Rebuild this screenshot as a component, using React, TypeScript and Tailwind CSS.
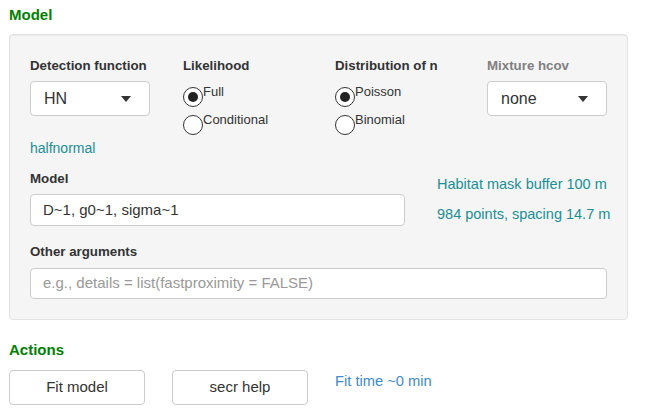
import React from 'react';

const Caret = () => (
  <svg width="10" height="6" viewBox="0 0 10 6" className="shrink-0">
    <path d="M0 0 L10 0 L5 6 Z" fill="#333" />
  </svg>
);

const Select = ({ value }: { value: string }) => (
  <div className="flex h-[35px] w-[120px] items-center justify-between rounded-[4px] border border-[#cccccc] bg-white pl-[13px] pr-[18px] text-[16px] text-[#333]">
    <span>{value}</span>
    <Caret />
  </div>
);

const Radio = ({ label, checked }: { label: string; checked?: boolean }) => (
  <div className="flex items-start h-[28px]">
    <span className="mt-[3px] flex h-[20px] w-[20px] shrink-0 items-center justify-center rounded-full border border-[#333] bg-white">
      {checked && <span className="h-[10px] w-[10px] rounded-full bg-[#222]" />}
    </span>
    <span className="text-[13px] leading-[15px] text-[#333]">{label}</span>
  </div>
);

const App: React.FC = () => {
  return (
    <div
      className="w-[646px] h-[420px] bg-white pl-[9px] pr-[18px] pt-[6px] text-[14px] text-[#333]"
      style={{ fontFamily: '"Liberation Sans", Arial, sans-serif' }}
    >
      <div className="text-[15px] font-bold leading-[18px] text-[#008000]">Model</div>

      {/* panel */}
      <div className="mt-[10px] rounded-[4px] border border-[#e3e3e3] bg-[#f5f5f5] px-[20px] pt-[21px] pb-[20px] shadow-[inset_0_1px_1px_rgba(0,0,0,0.05)]">
        <div className="flex">
          <div className="w-[153px]">
            <div className="text-[13.3px] font-bold leading-[20px]">Detection function</div>
            <div className="mt-[5px]">
              <Select value="HN" />
            </div>
          </div>
          <div className="w-[152px]">
            <div className="text-[13.3px] font-bold leading-[20px]">Likelihood</div>
            <div className="mt-[8px]">
              <Radio label="Full" checked />
              <Radio label="Conditional" />
            </div>
          </div>
          <div className="w-[152px]">
            <div className="text-[13.3px] font-bold leading-[20px]">Distribution of n</div>
            <div className="mt-[8px]">
              <Radio label="Poisson" checked />
              <Radio label="Binomial" />
            </div>
          </div>
          <div>
            <div className="text-[13.3px] font-bold leading-[20px] text-[#808080]">Mixture hcov</div>
            <div className="mt-[5px]">
              <Select value="none" />
            </div>
          </div>
        </div>

        <div className="-mt-[2px] leading-[20px] text-[#1a8f94]">halfnormal</div>

        <div className="mt-[11px] flex">
          <div className="w-[375px] shrink-0">
            <div className="text-[13.3px] font-bold leading-[20px]">Model</div>
            <div className="mt-[5px] flex h-[32px] items-center rounded-[4px] border border-[#cccccc] bg-white px-[12px] text-[15px]">
              D~1, g0~1, sigma~1
            </div>
          </div>
          <div className="ml-[32px] whitespace-nowrap pt-[5px] text-[14.5px] text-[#1a8f94] leading-[20px]">
            <div>Habitat mask buffer 100 m</div>
            <div className="mt-[10px]">984 points, spacing 14.7 m</div>
          </div>
        </div>

        <div className="mt-[16px] text-[13.3px] font-bold leading-[20px]">Other arguments</div>
        <div className="mt-[6px] flex h-[31px] items-center rounded-[4px] border border-[#cccccc] bg-white px-[12px] text-[15px] text-[#999]">
          e.g., details = list(fastproximity = FALSE)
        </div>
      </div>

      <div className="mt-[21px] text-[15px] font-bold leading-[18px] text-[#008000]">Actions</div>
      <div className="mt-[11px] flex items-start">
        <button className="h-[35px] w-[136px] rounded-[4px] border border-[#cccccc] bg-white text-[15px] text-[#333]">
          Fit model
        </button>
        <button className="ml-[27px] h-[35px] w-[136px] rounded-[4px] border border-[#cccccc] bg-white text-[15px] text-[#333]">
          secr help
        </button>
        <div className="ml-[27px] pt-[1px] text-[14.7px] leading-[20px] text-[#428bca]">Fit time ~0 min</div>
      </div>
    </div>
  );
};

export default App;
